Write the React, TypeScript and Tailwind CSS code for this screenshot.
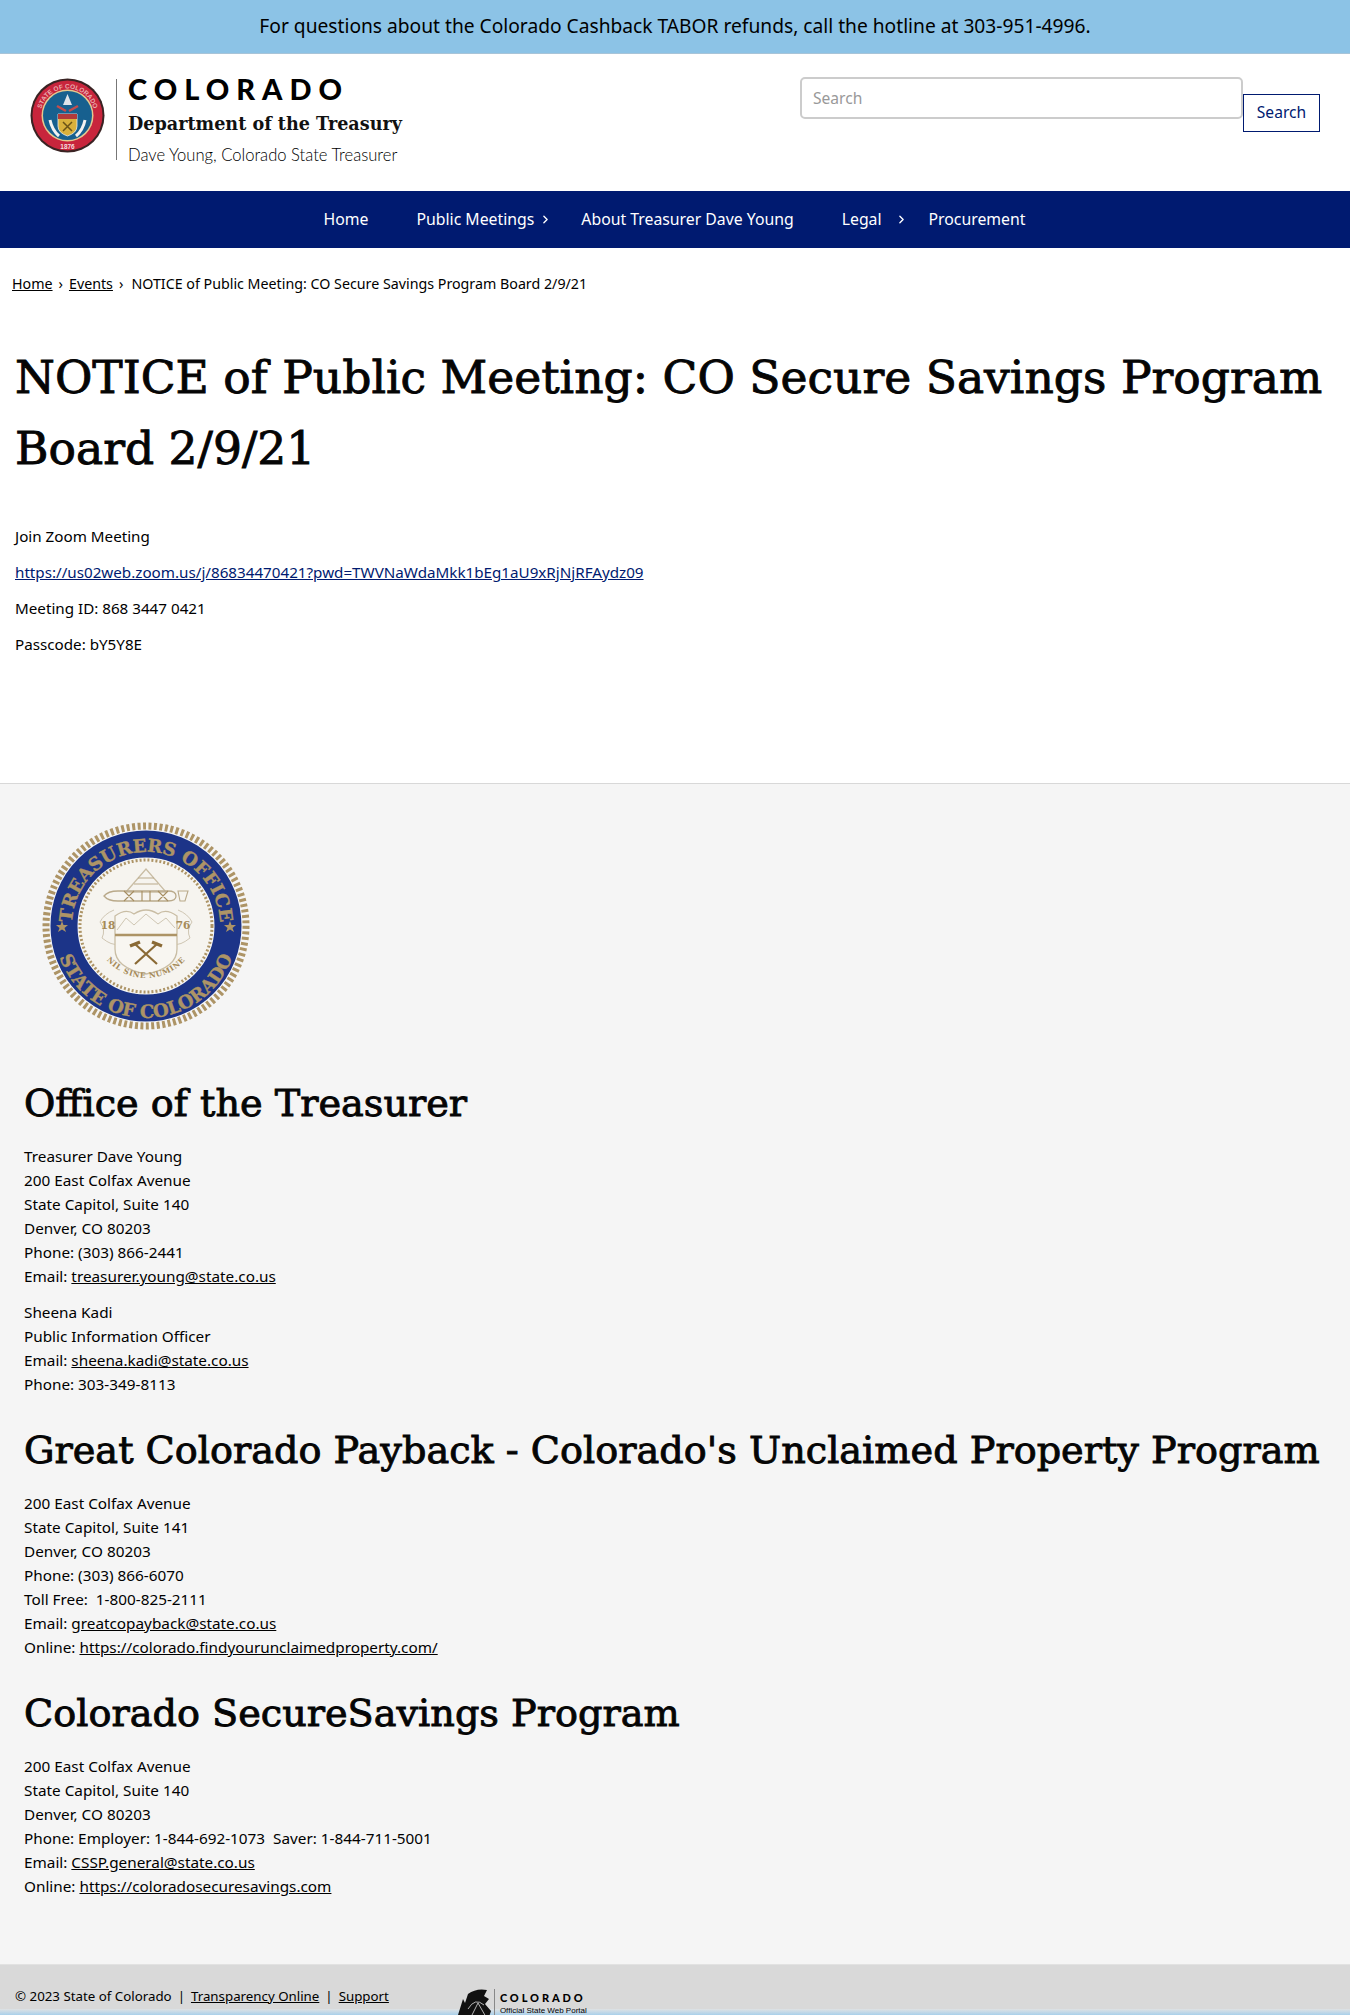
import { ChevronRight } from "lucide-react";

const slab = "font-['DejaVu_Serif',serif] [-webkit-text-stroke:0.9px_#050505] text-[#050505]";

function TreasurerSeal() {
  const tan = "#ad9466";
  return (
    <svg viewBox="0 0 208 208" className="w-[208px] h-[208px]">
      <defs>
        <path id="top" d="M 104 104 m -74 0 a 74 74 0 0 1 148 0" />
        <path id="bottom" d="M 104 104 m -92 0 a 92 92 0 0 0 184 0" />
        <path id="motto" d="M 104 104 m -52 0 a 52 52 0 0 0 104 0" />
      </defs>
      <circle cx="104" cy="104" r="100" fill="none" stroke={tan} strokeWidth="7" strokeDasharray="3 2.5" />
      <circle cx="104" cy="104" r="82" fill="none" stroke="#1c3488" strokeWidth="27" />
      <circle cx="104" cy="104" r="68" fill="#f6f4ef" />
      <circle cx="104" cy="104" r="66" fill="none" stroke={tan} strokeWidth="3" strokeDasharray="2 2" />
      <text fill={tan} stroke={tan} strokeWidth="0.4" fontFamily="DejaVu Serif" fontWeight="700" fontSize="18">
        <textPath href="#top" startOffset="50%" textAnchor="middle">TREASURERS OFFICE</textPath>
      </text>
      <text fill={tan} stroke={tan} strokeWidth="0.4" fontFamily="DejaVu Serif" fontWeight="700" fontSize="18">
        <textPath href="#bottom" startOffset="50%" textAnchor="middle">STATE OF COLORADO</textPath>
      </text>
      <path d="M20 99 L21.500 103 L26 103 L22.500 106 L24 110 L20 107.500 L16 110 L17.500 106 L14 103 L18.500 103 Z" fill={tan} />
      <path d="M188 99 L189.500 103 L194 103 L190.500 106 L192 110 L188 107.500 L184 110 L185.500 106 L182 103 L186.500 103 Z" fill={tan} />
      {/* triangle and eye */}
      <path d="M84 70 L104 47 L124 70 Z" fill="none" stroke="#c9bda4" strokeWidth="1.3" />
      <path d="M92 62 H116 M96 56 H112" stroke="#b9a98a" strokeWidth="1" />
      {/* fasces band */}
      <path d="M62 74 Q66 69 76 69 H126 Q134 69 134 74 Q134 79 126 79 H76 Q66 79 62 74 Z" fill="none" stroke="#b9a98a" strokeWidth="1.3" />
      <path d="M82 69 L92 79 M92 69 L82 79 M100 69 V79 M108 69 V79 M116 69 L126 79 M126 69 L116 79" stroke="#a58d60" strokeWidth="1.1" />
      <path d="M136 69 H146 L143 79 H138 Z" fill="none" stroke="#b9a98a" strokeWidth="1.1" />
      {/* scrolls */}
      <path d="M72 88 Q62 92 58 100 Q64 108 60 116 Q70 124 76 122" fill="none" stroke="#cfc6b3" strokeWidth="1" />
      <path d="M136 88 Q146 92 150 100 Q144 108 148 116 Q138 124 132 122" fill="none" stroke="#cfc6b3" strokeWidth="1" />
      {/* shield */}
      <path d="M73 94 Q84 86 92 92 Q104 84 116 92 Q124 86 135 94 V127 Q135 146 104 152 Q73 146 73 127 Z" fill="#f8f6f1" stroke="#c9bda4" strokeWidth="1.3" />
      <path d="M75 108 L84 96 L92 103 L104 92 L116 102 L124 96 L133 106" fill="none" stroke="#cfc6b3" strokeWidth="1" />
      <path d="M73 113 H135" stroke={tan} strokeWidth="2.5" />
      <path d="M93 122 L115 142 M115 122 L93 142" stroke="#8a6a35" strokeWidth="2.200" />
      <path d="M88 124 L98 120 M110 120 L120 124" stroke="#8a6a35" strokeWidth="3.500" />
      <text x="66" y="107" fontSize="10.500" textAnchor="middle" fill="#a58a58" fontFamily="DejaVu Serif" fontWeight="700">18</text>
      <text x="141" y="107" fontSize="10.500" textAnchor="middle" fill="#a58a58" fontFamily="DejaVu Serif" fontWeight="700">76</text>
      <text fontSize="7.500" fill="#a58a58" fontFamily="DejaVu Serif" fontWeight="700" letterSpacing="0.6">
        <textPath href="#motto" startOffset="50%" textAnchor="middle">NIL SINE NUMINE</textPath>
      </text>
    </svg>
  );
}

function StateSeal() {
  return (
    <svg viewBox="0 0 75 75" className="w-[75px] h-[75px] shrink-0">
      <defs>
        <path id="sealtop" d="M 37.5 37.5 m -27 0 a 27 27 0 0 1 54 0" />
      </defs>
      <circle cx="37.5" cy="37.5" r="37" fill="#3a2323" />
      <circle cx="37.5" cy="37.5" r="35" fill="#c8253c" />
      <circle cx="37.5" cy="37.5" r="26" fill="#e4c98f" />
      <circle cx="37.5" cy="37.5" r="24.500" fill="#17608f" />
      <text fill="#e8aeb0" fontSize="6.500" fontFamily="Liberation Sans" fontWeight="700">
        <textPath href="#sealtop" startOffset="50%" textAnchor="middle">STATE OF COLORADO</textPath>
      </text>
      <text x="37.5" y="71" textAnchor="middle" fill="#f5dede" fontSize="6.500" fontFamily="Liberation Sans" fontWeight="700">1876</text>
      <path d="M28 36 H47 V48 Q47 55 37.500 58 Q28 55 28 48 Z" fill="#d9b13c" stroke="#eee" strokeWidth="0.800" />
      <path d="M28 36 H47 V41 H28 Z" fill="#b23a3a" />
      <path d="M33 44 L42 53 M42 44 L33 53" stroke="#6b5316" strokeWidth="1.500" />
      <path d="M37.500 16 L42 27 H33 Z" fill="#dfe4ea" />
      <path d="M27 28 L36 33 M48 28 L39 33" stroke="#c34d4d" strokeWidth="2.500" />
      <path d="M20 42 Q22 52 29 58 M55 42 Q53 52 46 58" stroke="#f2f2f2" strokeWidth="3" fill="none" />
    </svg>
  );
}

function FooterLogo() {
  return (
    <div className="relative flex items-start h-[34px] ml-[69px] mt-[3px]">
      <svg viewBox="0 0 34 34" className="w-[34px] h-[34px] shrink-0">
        <path d="M0 26 L5 10 L7 14 L10 5 Q18 -1 29 1 L26 7 L31 10 L27 15 L33 22 L29 34 L0 34 Z" fill="#111" />
        <path d="M14 26 L20 14 L28 28 M10 20 Q17 8 26 16" stroke="#ddd" strokeWidth="0.800" fill="none" />
      </svg>
      <div className="ml-[2px] pl-[5px] border-l border-[#888] h-[34px]">
        <div className="font-['Lato',sans-serif] font-black text-[11px] leading-[14px] tracking-[2.9px] text-black mt-[2px]">COLORADO</div>
        <div className="font-['Liberation_Sans',sans-serif] text-[8px] leading-[10px] text-black mt-[1px]">Official State Web Portal</div>
      </div>
    </div>
  );
}

function Block({ title, lines, after }: { title: string; lines: React.ReactNode[]; after?: React.ReactNode[] }) {
  return (
    <section>
      <h2 className={`${slab} text-[38.2px] leading-[54px]`}>{title}</h2>
      <div className="mt-[14px] leading-[24px] whitespace-pre-wrap">
        {lines.map((l, i) => (
          <div key={i}>{l}</div>
        ))}
      </div>
      {after && (
        <div className="mt-[12px] leading-[24px] whitespace-pre-wrap">
          {after.map((l, i) => (
            <div key={i}>{l}</div>
          ))}
        </div>
      )}
    </section>
  );
}

function Mail({ children }: { children: React.ReactNode }) {
  return <a className="underline text-black">{children}</a>;
}

export default function App() {
  return (
    <div className="font-['Noto_Sans',sans-serif] text-[15.3px] relative h-[2015px] overflow-hidden bg-white text-black">
      <div className="h-[54px] bg-[#8cc3e6] border-b border-[#a8c4d8] flex items-center justify-center text-[19.2px] text-black">
        For questions about the Colorado Cashback TABOR refunds, call the hotline at 303-951-4996.
      </div>

      <header className="h-[137px] flex justify-between">
        <div className="flex pl-[30px] pt-[24px]">
          <StateSeal />
          <div className="ml-[11px] h-[81px] border-l border-[#777] pl-[11px] mt-[1px]">
            <div className="font-['Lato',sans-serif] font-black text-[29px] leading-[20px] tracking-[7px] text-black">COLORADO</div>
            <div className="font-['DejaVu_Serif',serif] font-bold text-[17.6px] leading-[24px] mt-[13px] text-[#111]">Department of the Treasury</div>
            <div className="font-['Lato',sans-serif] font-light text-[16.6px] leading-[20px] mt-[9px] text-black">Dave Young, Colorado State Treasurer</div>
          </div>
        </div>
        <div className="flex items-start pt-[23px] pr-[30px]">
          <input
            placeholder="Search"
            className="w-[443px] h-[42px] px-[11px] text-[15.6px] border-2 border-[#ccc] rounded-[5px] placeholder:text-[#999] bg-white"
          />
          <button className="mt-[17px] w-[77px] h-[38px] border border-[#001a70] text-[#001a70] text-[15.6px] bg-white">Search</button>
        </div>
      </header>

      <nav className="h-[57px] bg-[#001a70] flex justify-center items-center text-white text-[15.8px] pr-[1px]">
        <a className="mr-[48px]">Home</a>
        <a>Public Meetings</a>
        <ChevronRight size={13} strokeWidth={2.5} className="ml-[5px] mr-[6px]" />
        <a className="ml-[23px] mr-[48px]">About Treasurer Dave Young</a>
        <a>Legal</a>
        <ChevronRight size={13} strokeWidth={2.5} className="mx-[13px]" />
        <a className="ml-[8px]">Procurement</a>
      </nav>

      <div className="h-[71px] px-[12px] pt-[24px] text-[14.25px] leading-[24px]">
        <a className="underline">Home</a>
        <span className="mx-[6px]">›</span>
        <a className="underline">Events</a>
        <span className="ml-[6px] mr-[8px]">›</span>
        NOTICE of Public Meeting: CO Secure Savings Program Board 2/9/21
      </div>

      <main className="h-[464px] px-[15px]">
        <h1 className={`${slab} text-[45.6px] leading-[71px] pt-[23px]`}>
          NOTICE of Public Meeting: CO Secure Savings Program Board 2/9/21
        </h1>
        <div className="mt-[40px] text-[15.2px] leading-[24px] flex flex-col gap-[12px]">
          <p>Join Zoom Meeting</p>
          <p>
            <a className="underline text-[#001a70]">https://us02web.zoom.us/j/86834470421?pwd=TWVNaWdaMkk1bEg1aU9xRjNjRFAydz09</a>
          </p>
          <p>Meeting ID: 868 3447 0421</p>
          <p>Passcode: bY5Y8E</p>
        </div>
      </main>

      <footer className="h-[1181px] bg-[#f5f5f5] border-t border-[#d8d8d8]">
        <div className="pl-[42px] pt-[38px]">
          <TreasurerSeal />
        </div>
        <div className="pl-[24px] pt-[46px] flex flex-col gap-[27px]">
          <Block
            title="Office of the Treasurer"
            lines={[
              "Treasurer Dave Young",
              "200 East Colfax Avenue",
              "State Capitol, Suite 140",
              "Denver, CO 80203",
              "Phone: (303) 866-2441",
              <>Email: <Mail>treasurer.young@state.co.us</Mail></>,
            ]}
            after={[
              "Sheena Kadi",
              "Public Information Officer",
              <>Email: <Mail>sheena.kadi@state.co.us</Mail></>,
              "Phone: 303-349-8113",
            ]}
          />
          <Block
            title="Great Colorado Payback - Colorado's Unclaimed Property Program"
            lines={[
              "200 East Colfax Avenue",
              "State Capitol, Suite 141",
              "Denver, CO 80203",
              "Phone: (303) 866-6070",
              "Toll Free:  1-800-825-2111",
              <>Email: <Mail>greatcopayback@state.co.us</Mail></>,
              <>Online: <Mail>https://colorado.findyourunclaimedproperty.com/</Mail></>,
            ]}
          />
          <Block
            title="Colorado SecureSavings Program"
            lines={[
              "200 East Colfax Avenue",
              "State Capitol, Suite 140",
              "Denver, CO 80203",
              "Phone: Employer: 1-844-692-1073  Saver: 1-844-711-5001",
              <>Email: <Mail>CSSP.general@state.co.us</Mail></>,
              <>Online: <Mail>https://coloradosecuresavings.com</Mail></>,
            ]}
          />
        </div>
      </footer>

      <div className="absolute left-0 right-0 top-[1964px] h-[51px] bg-[#d9d9d9] border-t border-[#e2e2e2] flex pl-[15px] pt-[21px] text-[13.3px] leading-[20px]">
        <div className="absolute left-0 right-0 bottom-0 h-[6px] bg-gradient-to-b from-[#dfe2e4] to-[#a9d0ea]" />
        <span className="relative">© 2023 State of Colorado</span>
        <span className="relative mx-[6px]">|</span>
        <a className="relative underline">Transparency Online</a>
        <span className="relative mx-[6px]">|</span>
        <a className="relative underline">Support</a>
        <FooterLogo />
      </div>
    </div>
  );
}
